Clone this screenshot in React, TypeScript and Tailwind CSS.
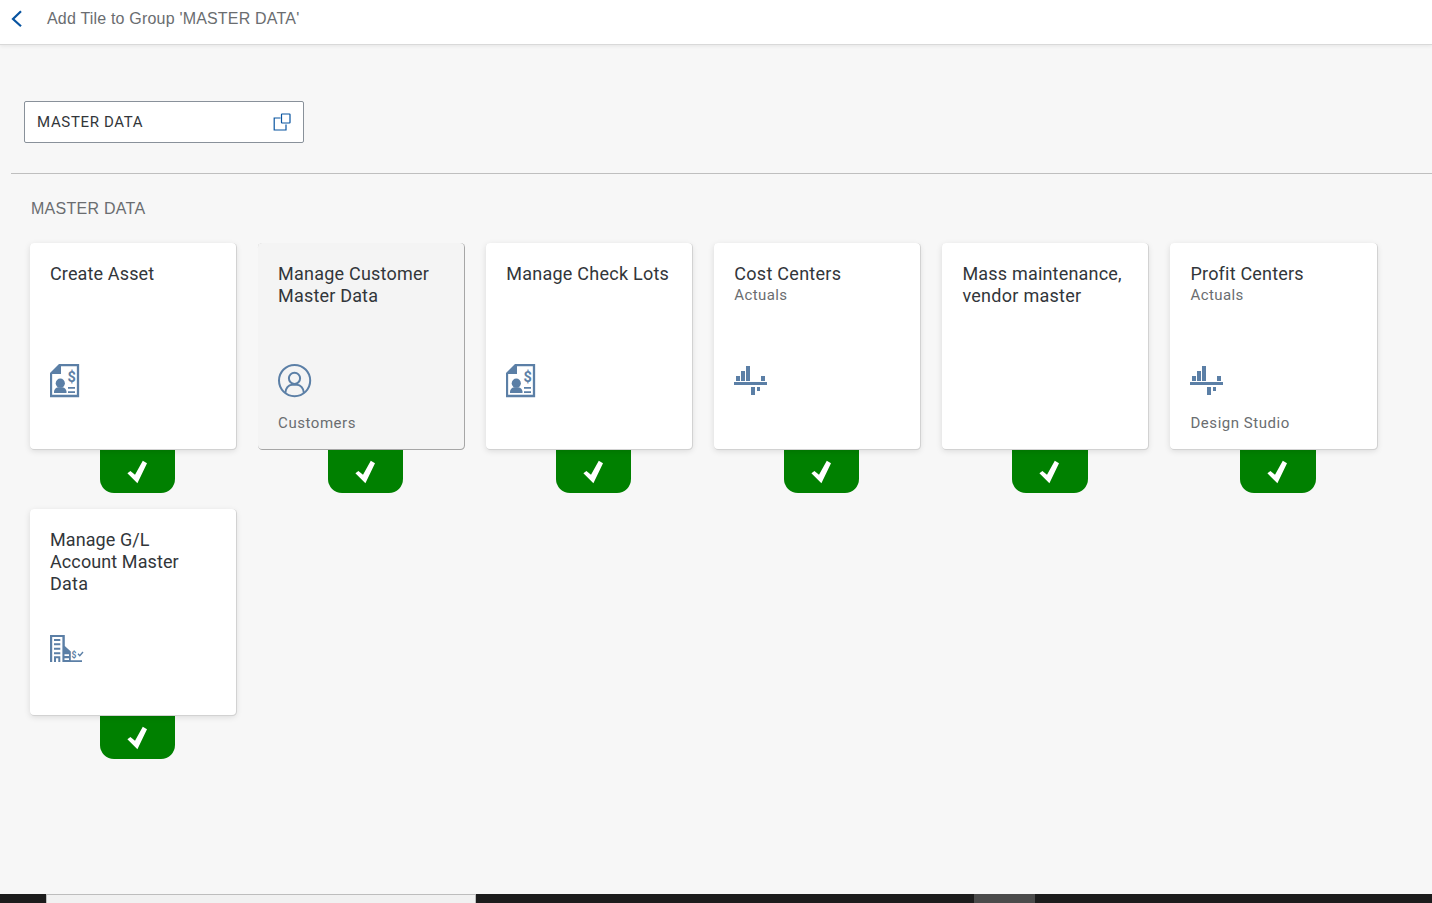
import type { ReactNode } from 'react';

type Tile = {
  lines: { text: string; cls: string }[];
  subtitle?: string;
  footer?: string;
  icon?: ReactNode;
  active?: boolean;
};

const InvoiceIcon = () => (
  <svg width="34" height="34" viewBox="0 0 34 34" fill="#5b7fa6">
    <path d="M10 1H28V32H1V10" fill="none" stroke="#5b7fa6" strokeWidth="2.3" />
    <path d="M9 0H11V10H0V9Z" />
    <circle cx="10.3" cy="19.2" r="4.6" />
    <path d="M4 29V27.5Q4.5 24 8 23.3H12.5Q16 24 16.5 27.5V29Z" />
    <path d="M18 23H25V24.8H18ZM18 27.2H25V29H18Z" />
    <text x="21.6" y="17.8" textAnchor="middle" fontSize="14.5" fontWeight="700" fontFamily="Roboto, sans-serif">$</text>
  </svg>
);

const CustomerIcon = () => (
  <svg width="34" height="34" viewBox="0 0 34 34" fill="none" stroke="#5b7fa6" strokeWidth="2">
    <circle cx="16.6" cy="16.6" r="15.6" />
    <circle cx="16.5" cy="14.3" r="5.6" />
    <path d="M7.3 29C7.5 24.2 10.5 20.8 14 20.8H19C22.5 20.8 25.7 24.2 25.9 29" />
  </svg>
);

const ChartIcon = () => (
  <svg width="34" height="34" viewBox="0 0 34 34" fill="#5b7fa6" shapeRendering="crispEdges">
    <path d="M0 18H33.3V21H0ZM2.2 12H6V17H2.2ZM7.3 7H11.2V17H7.3ZM12.4 2H16.4V17H12.4ZM27.4 12H31.3V17H27.4ZM17 23H20.9V31H17ZM22.6 23H26.4V27H22.6Z" />
  </svg>
);

const BuildingIcon = () => (
  <svg width="34" height="34" viewBox="0 0 34 34" fill="#5b7fa6">
    <path d="M0 5H14.8V16L20.8 21.5V30.2H32V32H12.4V7H2.2V32H0Z" />
    <path d="M4 9H10.3V11H4ZM4 13.3H10.3V15.3H4ZM4 17.8H10.3V19.8H4ZM4 22.2H10.3V24.2H4ZM4 26.3H10.3V32H8.3V28.2H6V32H4Z" />
    <path d="M14.5 24.2H19V26H14.5ZM14.5 28.3H19V30H14.5Z" fill="#fff" />
    <text x="23.9" y="27.7" textAnchor="middle" fontSize="8.5" fontWeight="700" fontFamily="Roboto, sans-serif">$</text>
    <path d="M28 23.8L29.8 25.7L33 22" fill="none" stroke="#5b7fa6" strokeWidth="1.4" />
  </svg>
);

const tiles: Tile[] = [
  { lines: [{ text: 'Create Asset', cls: 'tracking-[0.14px]' }], icon: <InvoiceIcon /> },
  {
    lines: [
      { text: 'Manage Customer', cls: 'tracking-[0.22px]' },
      { text: 'Master Data', cls: 'tracking-[0.18px]' },
    ],
    footer: 'Customers',
    icon: <CustomerIcon />,
    active: true,
  },
  { lines: [{ text: 'Manage Check Lots', cls: 'tracking-[0.25px]' }], icon: <InvoiceIcon /> },
  { lines: [{ text: 'Cost Centers', cls: 'tracking-[0.28px]' }], subtitle: 'Actuals', icon: <ChartIcon /> },
  {
    lines: [
      { text: 'Mass maintenance,', cls: 'tracking-[0.2px]' },
      { text: 'vendor master', cls: 'tracking-[0.28px]' },
    ],
  },
  {
    lines: [{ text: 'Profit Centers', cls: 'tracking-[0.2px]' }],
    subtitle: 'Actuals',
    footer: 'Design Studio',
    icon: <ChartIcon />,
  },
  {
    lines: [
      { text: 'Manage G/L', cls: 'tracking-[0.08px]' },
      { text: 'Account Master', cls: 'tracking-[0.1px]' },
      { text: 'Data', cls: 'tracking-[0.25px]' },
    ],
    icon: <BuildingIcon />,
  },
];

function TileCard({ tile }: { tile: Tile }) {
  return (
    <div className="flex w-[206.1px] flex-col items-center font-['Roboto',sans-serif]">
      <div
        className={
          tile.active
            ? 'z-10 flex h-[206px] w-full flex-col rounded-[4px] bg-[#f4f4f4] px-5 pt-[20px] shadow-[0.5px_0.5px_0_0.5px_#a6a6a6]'
            : 'z-10 flex h-[206px] w-full flex-col rounded-[4px] bg-white px-5 pt-[20px] shadow-[0.5px_0.5px_0_0.5px_#d2d2d2,0_2px_6px_rgba(0,0,0,0.12)]'
        }
      >
        <div className="h-[101px] whitespace-nowrap">
          {tile.lines.map((l) => (
            <div key={l.text} className={`text-[18px] leading-[22px] text-[#32363a] ${l.cls}`}>
              {l.text}
            </div>
          ))}
          {tile.subtitle && (
            <div className="text-[15px] leading-5 tracking-[0.4px] text-[#6a6d70]">{tile.subtitle}</div>
          )}
        </div>
        <div className="h-[34px]">{tile.icon}</div>
        {tile.footer && (
          <div className="mt-[15px] text-[15px] leading-5 tracking-[0.54px] text-[#6a6d70]">{tile.footer}</div>
        )}
      </div>
      <div className="mt-px ml-[8.9px] h-[43px] w-[75.3px] rounded-b-[14px] bg-[#008000]">
        <svg width="75" height="43" viewBox="0 0 75 43" fill="#fff">
          <path d="M27.4 23.3L30.4 21L35 24.8L42.8 10.8L47 13.2L37.4 33.3Z" />
        </svg>
      </div>
    </div>
  );
}

export default function App() {
  return (
    <div className="flex h-[903px] w-[1432px] flex-col overflow-hidden bg-[#f7f7f7] font-['Liberation_Sans',Arial,sans-serif]">
      <header className="flex h-[45px] shrink-0 items-start border-b border-[#d9d9d9] bg-white pl-[11px] shadow-[0_1px_4px_rgba(0,0,0,0.08)]">
        <svg className="mt-[10px]" width="12" height="18" viewBox="0 0 12 18" fill="none" stroke="#0854a0" strokeWidth="2.2">
          <path d="M10 1.2L2 9L10 16.2" />
        </svg>
        <h1 className="mt-[9px] ml-6 text-[16px] leading-5 tracking-[0.19px] text-[#6a6d70]">
          Add Tile to Group 'MASTER DATA'
        </h1>
      </header>
      <main className="flex grow flex-col">
        <div className="mt-14 ml-6 flex h-[42px] w-[280px] items-center justify-between rounded-[2px] border border-[#89919a] bg-white pr-[12px] pl-3">
          <span className="font-['Roboto',sans-serif] text-[15px] tracking-[0.66px] text-[#32363a]">MASTER DATA</span>
          <svg width="18" height="18" viewBox="0 0 18 18" fill="none" stroke="#0854a0" strokeWidth="1.2">
            <path d="M7.5 5H1.2V17H13V11.5" />
            <rect x="8.5" y="1" width="8.5" height="9" rx=".5" />
          </svg>
        </div>
        <div className="mt-[30px] ml-[11px] h-px bg-[#bfbfbf]" />
        <h2 className="mt-[25px] ml-[31px] text-[16px] leading-5 tracking-[0.27px] text-[#6a6d70]">MASTER DATA</h2>
        <div className="mt-[24px] ml-[30px] grid grid-cols-[repeat(6,228.1px)] gap-y-4">
          {tiles.map((t, i) => (
            <TileCard key={i} tile={t} />
          ))}
        </div>
      </main>
      <footer className="flex h-[9px] shrink-0 bg-[#1c1c1c]">
        <div className="ml-[46px] w-[430px] border-x border-t border-[#bdbdbd] bg-[#f1f1f1]" />
        <div className="ml-[498px] w-[61px] bg-[#4b4b4b]" />
      </footer>
    </div>
  );
}
